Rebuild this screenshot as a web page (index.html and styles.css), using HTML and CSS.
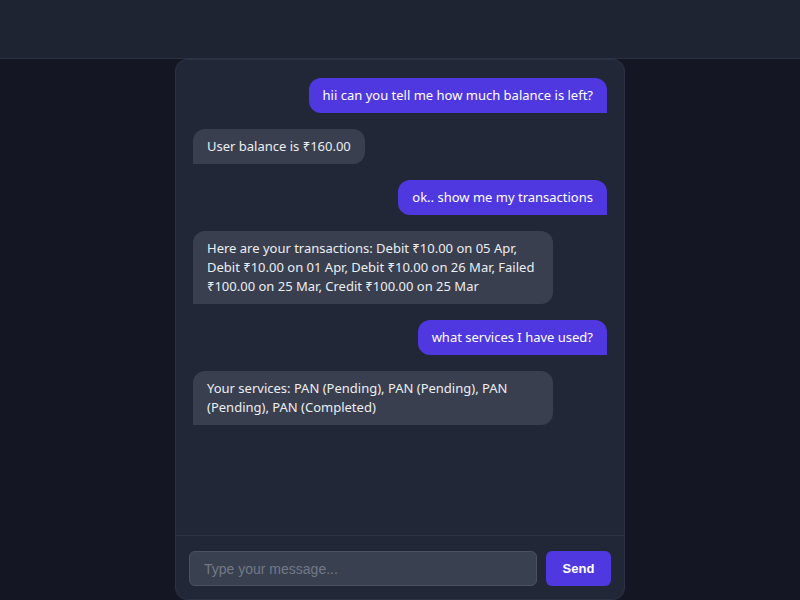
FILE: index.html
```html
<!DOCTYPE html>
<html lang="en">
<head>
<meta charset="utf-8">
<title>Chat</title>
<link rel="stylesheet" href="styles.css">
</head>
<body>
<header class="topbar"></header>
<main class="main">
  <section class="chat">
    <div class="messages">
      <div class="msg user">hii can you tell me how much balance is left?</div>
      <div class="msg bot">User balance is ₹160.00</div>
      <div class="msg user">ok.. show me my transactions</div>
      <div class="msg bot">Here are your transactions: Debit ₹10.00 on 05 Apr, Debit ₹10.00 on 01 Apr, Debit ₹10.00 on 26 Mar, Failed ₹100.00 on 25 Mar, Credit ₹100.00 on 25 Mar</div>
      <div class="msg user">what services I have used?</div>
      <div class="msg bot">Your services: PAN (Pending), PAN (Pending), PAN (Pending), PAN (Completed)</div>
    </div>
    <form class="composer">
      <input class="composer-input" type="text" placeholder="Type your message...">
      <button class="send" type="button">Send</button>
    </form>
  </section>
</main>
</body>
</html>
```
FILE: styles.css
```css
* { box-sizing: border-box; }
html, body { height: 100%; }
body {
  margin: 0;
  background: #141624;
  font-family: "Noto Sans", "DejaVu Sans", sans-serif;
  display: flex;
  flex-direction: column;
  overflow: hidden;
}
.topbar {
  height: 59px;
  flex: none;
  background: #1f2433;
  border-bottom: 1px solid #2c3243;
}
.main {
  flex: 1;
  min-height: 0;
  display: flex;
  justify-content: center;
}
.chat {
  width: 450px;
  height: 100%;
  background: #212736;
  border: 1px solid #2c3243;
  border-radius: 12px;
  display: flex;
  flex-direction: column;
}
.messages {
  flex: 1;
  padding: 18px 17px 16px;
  display: flex;
  flex-direction: column;
  gap: 16px;
}
.msg {
  max-width: 360px;
  padding: 8px 14px;
  font-size: 13px;
  line-height: 19px;
  border-radius: 12px;
}
.user {
  align-self: flex-end;
  background: #4f38e0;
  color: #ffffff;
  border-bottom-right-radius: 0;
}
.bot {
  align-self: flex-start;
  background: #393f4f;
  color: #eceef2;
  border-bottom-left-radius: 0;
}
.composer {
  margin: 0;
  border-top: 1px solid #2c3243;
  padding: 15px 13px 13px;
  display: flex;
  gap: 9px;
}
.composer-input {
  flex: 1;
  height: 35px;
  background: #394050;
  border: 1px solid #4a5162;
  border-radius: 6px;
  padding: 0 14px;
  font-family: "Liberation Sans", Arial, sans-serif;
  font-size: 14px;
  color: #e5e7eb;
  outline: none;
}
.composer-input::placeholder { color: #737988; }
.send {
  width: 65px;
  height: 35px;
  border: none;
  border-radius: 6px;
  background: #4f38e0;
  color: #ffffff;
  font-family: "Liberation Sans", Arial, sans-serif;
  font-weight: bold;
  font-size: 13px;
}
```
